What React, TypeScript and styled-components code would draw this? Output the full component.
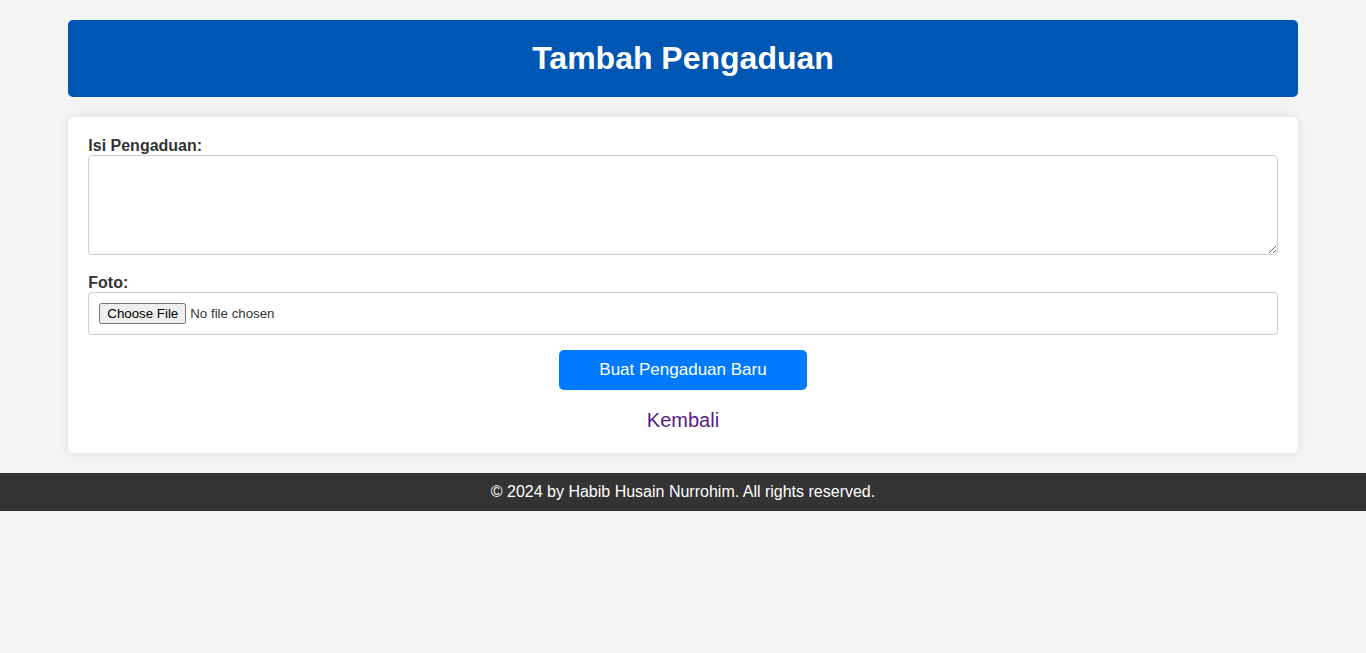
import styled, { createGlobalStyle } from 'styled-components';

const GlobalStyle = createGlobalStyle`
  body {
    margin: 0;
    background-color: #f4f4f4;
    font-family: "Liberation Sans", Arial, sans-serif;
    color: #333;
  }
`;

const Container = styled.div`
  width: 90%;
  margin: 20px auto;
`;

const Header = styled.header`
  background-color: #0056b3;
  color: #fff;
  padding: 20px;
  border-radius: 5px;
  text-align: center;
  h1 {
    margin: 0;
    font-size: 32px;
    line-height: 37px;
  }
`;

const Card = styled.div`
  background-color: #fff;
  margin-top: 20px;
  padding: 20px;
  border-radius: 5px;
  box-shadow: 0 0 10px rgba(0, 0, 0, 0.1);
`;

const Label = styled.label`
  display: block;
  font-weight: bold;
  font-size: 16px;
  line-height: 18px;
`;

const TextArea = styled.textarea`
  display: block;
  width: 100%;
  height: 100px;
  box-sizing: border-box;
  padding: 10px;
  margin: 0 0 19px;
  border: 1px solid #ccc;
  border-radius: 4px;
  font-family: inherit;
`;

const FileInput = styled.input`
  display: block;
  width: 100%;
  box-sizing: border-box;
  padding: 10px;
  border: 1px solid #ccc;
  border-radius: 4px;
  font-family: "Liberation Sans", Arial, sans-serif;
  font-size: 13.3px;
`;

const Actions = styled.div`
  display: flex;
  flex-direction: column;
  align-items: center;
  margin-top: 15px;
`;

const SubmitButton = styled.button`
  background-color: #007bff;
  color: #fff;
  border: none;
  border-radius: 5px;
  padding: 10px 40px;
  font-family: inherit;
  font-size: 17px;
  line-height: 20px;
  cursor: pointer;
`;

const BackLink = styled.a`
  margin-top: 18px;
  font-size: 20px;
  line-height: 25px;
  color: #551a8b;
  text-decoration: none;
`;

const Footer = styled.footer`
  background-color: #333;
  color: #fff;
  text-align: center;
  padding: 10px 0;
  font-size: 16px;
  line-height: 18px;
`;

export default function App() {
  return (
    <>
      <GlobalStyle />
      <Container>
        <Header>
          <h1>Tambah Pengaduan</h1>
        </Header>
        <Card>
          <form onSubmit={(e) => e.preventDefault()}>
            <Label htmlFor="isi">Isi Pengaduan:</Label>
            <TextArea id="isi" name="isi" />
            <Label htmlFor="foto">Foto:</Label>
            <FileInput id="foto" type="file" name="foto" />
            <Actions>
              <SubmitButton type="submit">Buat Pengaduan Baru</SubmitButton>
              <BackLink href="#">Kembali</BackLink>
            </Actions>
          </form>
        </Card>
      </Container>
      <Footer>&copy; 2024 by Habib Husain Nurrohim. All rights reserved.</Footer>
    </>
  );
}
